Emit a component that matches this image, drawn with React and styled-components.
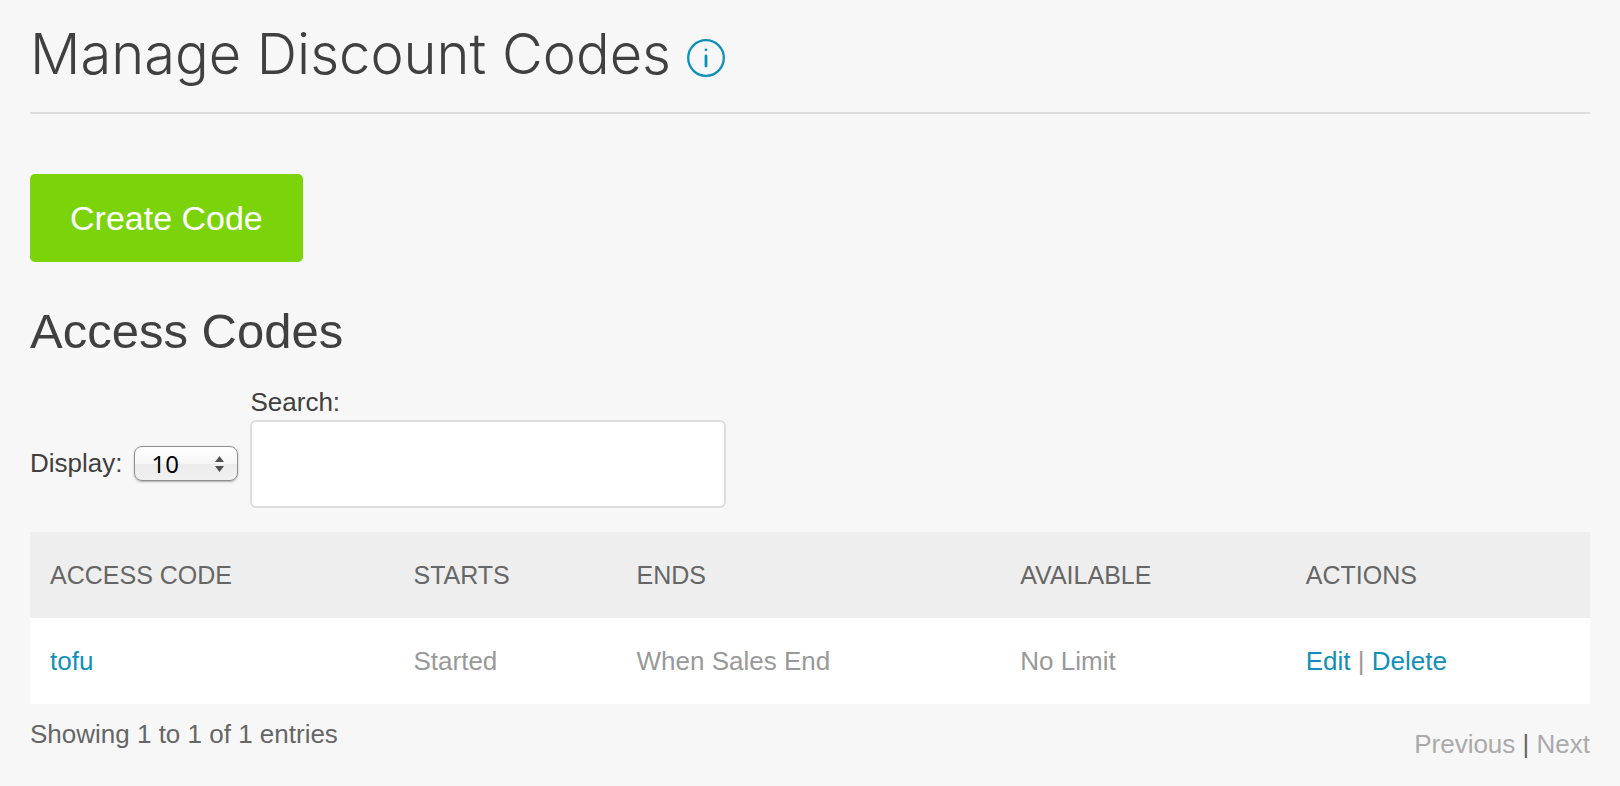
import React, { useState, useCallback } from 'react';
import styled, { createGlobalStyle } from 'styled-components';

const GlobalStyle = createGlobalStyle`
  * {
    box-sizing: border-box;
  }
  body {
    margin: 0;
    background-color: #f7f7f7;
    color: #404040;
    font-family: 'Liberation Sans', Arial, sans-serif;
    font-size: 26px;
    line-height: 36px;
  }
  input, select, button {
    font-family: inherit;
  }
`;

const Page = styled.main`
  padding: 20px 30px;
`;
const PageHeader = styled.header`
  display: flex;
  align-items: center;
  gap: 16px;
  padding-bottom: 24px;
  margin-bottom: 60px;
  border-bottom: 2px solid #ddd;
`;
const PageTitle = styled.h1`
  margin: 0;
  font-family: Inter, 'Liberation Sans', sans-serif;
  font-size: 56px;
  font-weight: 300;
  line-height: 68px;
`;
const InfoButton = styled.button`
  display: flex;
  margin-top: 8px;
  padding: 0;
  border: none;
  background: none;
  color: #0f90ba;
`;
const CreateButton = styled.button`
  display: block;
  height: 88px;
  padding: 0 40px;
  border: none;
  border-radius: 5px;
  background-color: #7bd40a;
  color: #fff;
  font-size: 34px;
`;
const SectionTitle = styled.h2`
  margin: 40px 0 24px;
  font-size: 49px;
  font-weight: 400;
  line-height: 58px;
`;
const Filters = styled.div`
  display: flex;
  align-items: flex-end;
  gap: 12px;
  margin-bottom: 24px;
`;
const DisplayField = styled.div`
  display: flex;
  align-items: flex-end;
  gap: 12px;
  padding-bottom: 27px;
`;
const SelectWrapper = styled.div`
  display: grid;
  align-items: center;

  select,
  svg {
    grid-area: 1 / 1;
  }
  select {
    appearance: none;
    width: 104px;
    height: 35px;
    padding: 0 16px;
    border: 1px solid #8f8f8f;
    border-radius: 8px;
    background: linear-gradient(#fff 0%, #f6f6f6 50%, #ebebeb 51%, #f1f1f1 100%);
    box-shadow: 0 1px 2px rgba(0, 0, 0, 0.3);
    color: #000;
    font-family: 'Noto Sans', sans-serif;
    font-size: 24px;
  }
  svg {
    justify-self: end;
    margin-right: 14px;
    pointer-events: none;
  }
`;
const SearchField = styled.div`
  display: flex;
  flex-direction: column;
  width: 476px;

  input {
    height: 88px;
    padding: 0 20px;
    border: 2px solid #ddd;
    border-radius: 6px;
    background-color: #fff;
    font-size: 26px;
  }
`;
const CodesTable = styled.table`
  width: 100%;
  table-layout: fixed;
  border-collapse: collapse;
  text-align: left;
`;
const HeadCell = styled.th`
  width: ${({ $width }) => $width};
  height: 86px;
  padding: 0 20px;
  background-color: #eee;
  color: #666;
  font-size: 25px;
  font-weight: 400;
  text-transform: uppercase;
`;
const Cell = styled.td`
  height: 86px;
  padding: 0 20px;
  background-color: #fff;
  color: #999;
`;
const TextLink = styled.a`
  color: #0f90ba;
  text-decoration: none;
`;
const TableFooter = styled.footer`
  display: flex;
  justify-content: space-between;
  padding-top: 12px;
  color: #666;
`;
const Pager = styled.nav`
  padding-top: 10px;

  button {
    padding: 0;
    border: none;
    background: none;
    color: #aaa;
    font-size: 26px;
    line-height: 36px;
  }
`;

const columns = [
  { title: 'Access Code', width: '23.3%' },
  { title: 'Starts', width: '14.3%' },
  { title: 'Ends', width: '24.6%' },
  { title: 'Available', width: '18.3%' },
  { title: 'Actions', width: '19.5%' },
];

const codes = [
  { name: 'tofu', starts: 'Started', ends: 'When Sales End', available: 'No Limit' },
];

const InfoIcon = () => (
  <svg width='38' height='38' viewBox='0 0 38 38' fill='none' stroke='currentColor'>
    <circle cx='19' cy='19' r='17.8' strokeWidth='2.3' />
    <circle cx='19' cy='10.8' r='1.4' fill='currentColor' stroke='none' />
    <path d='M19 17v10' strokeWidth='2.8' strokeLinecap='round' />
  </svg>
);

const SelectArrows = () => (
  <svg width='9' height='16' viewBox='0 0 9 16' fill='#505050'>
    <path d='M4.5 0L9 6H0zM4.5 16L9 10H0z' />
  </svg>
);

const App = () => {
  const [pageSize, setPageSize] = useState('10');
  const [search, setSearch] = useState('');

  const handlePageSize = useCallback((e) => {
    setPageSize(e.target.value);
  }, []);

  const handleSearch = useCallback((e) => {
    setSearch(e.target.value);
  }, []);

  const rows = codes.filter((code) => code.name.includes(search));

  return (
    <Page>
      <GlobalStyle />
      <PageHeader>
        <PageTitle>Manage Discount Codes</PageTitle>
        <InfoButton type='button' aria-label='About discount codes'>
          <InfoIcon />
        </InfoButton>
      </PageHeader>

      <CreateButton type='button'>Create Code</CreateButton>

      <SectionTitle>Access Codes</SectionTitle>
      <Filters>
        <DisplayField>
          <label htmlFor='display'>Display:</label>
          <SelectWrapper>
            <select id='display' value={pageSize} onChange={handlePageSize}>
              <option>10</option>
              <option>25</option>
              <option>50</option>
            </select>
            <SelectArrows />
          </SelectWrapper>
        </DisplayField>
        <SearchField>
          <label htmlFor='search'>Search:</label>
          <input id='search' type='text' value={search} onChange={handleSearch} />
        </SearchField>
      </Filters>

      <CodesTable>
        <thead>
          <tr>
            {columns.map((column) => (
              <HeadCell key={column.title} $width={column.width}>
                {column.title}
              </HeadCell>
            ))}
          </tr>
        </thead>
        <tbody>
          {rows.map((code) => (
            <tr key={code.name}>
              <Cell>
                <TextLink href='#code'>{code.name}</TextLink>
              </Cell>
              <Cell>{code.starts}</Cell>
              <Cell>{code.ends}</Cell>
              <Cell>{code.available}</Cell>
              <Cell>
                <TextLink href='#edit'>Edit</TextLink> | <TextLink href='#delete'>Delete</TextLink>
              </Cell>
            </tr>
          ))}
        </tbody>
      </CodesTable>

      <TableFooter>
        <div>Showing 1 to 1 of 1 entries</div>
        <Pager>
          <button type='button'>Previous</button> | <button type='button'>Next</button>
        </Pager>
      </TableFooter>
    </Page>
  );
};

export default App;
